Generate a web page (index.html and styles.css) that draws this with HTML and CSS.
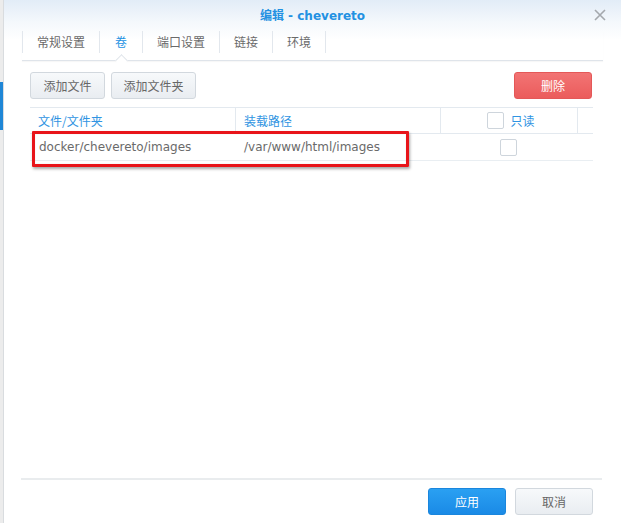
FILE: index.html
```html
<!DOCTYPE html>
<html lang="zh-CN">
<head>
<meta charset="utf-8">
<title>编辑 - chevereto</title>
<link rel="stylesheet" href="styles.css">
</head>
<body>
<div class="window">
  <div class="side"><div class="side-mark"></div></div>
  <div class="dialog">
    <header class="titlebar">
      <span class="tb-left"></span>
      <h1 class="title">编辑 - chevereto</h1>
      <div class="tb-right">
        <span class="close" aria-label="关闭">
          <svg width="12" height="12" viewBox="0 0 12 12"><path d="M1 1 L11 11 M11 1 L1 11" stroke="#a4a8ad" stroke-width="1.6" fill="none"/></svg>
        </span>
      </div>
    </header>
    <nav class="tabs">
      <div class="tab">常规设置</div>
      <div class="tab active">卷</div>
      <div class="tab">端口设置</div>
      <div class="tab">链接</div>
      <div class="tab last">环境</div>
    </nav>
    <div class="toolbar">
      <div class="btn-group">
        <button class="btn btn-add-file">添加文件</button>
        <button class="btn btn-add-folder">添加文件夹</button>
      </div>
      <button class="btn btn-danger">删除</button>
    </div>
    <div class="table">
      <div class="thead">
        <div class="th">文件/文件夹</div>
        <div class="th">装载路径</div>
        <div class="th th-center"><span class="checkbox"></span><span>只读</span></div>
        <div class="th th-end"></div>
      </div>
      <div class="trow">
        <div class="td latin">docker/chevereto/images</div>
        <div class="td latin">/var/www/html/images</div>
        <div class="td td-center"><span class="checkbox"></span></div>
        <div class="td"></div>
      </div>
      <div class="highlight"></div>
    </div>
    <div class="spacer"></div>
    <footer class="footer">
      <button class="btn btn-primary">应用</button>
      <button class="btn btn-cancel">取消</button>
    </footer>
  </div>
</div>
</body>
</html>
```
FILE: styles.css
```css
* { box-sizing: border-box; }
html, body { margin: 0; padding: 0; background: #fff; }
body {
  font-family: "Noto Sans CJK SC", "DejaVu Sans", sans-serif;
  font-size: 12px;
  color: #666;
}
.window {
  width: 621px;
  height: 523px;
  display: flex;
  overflow: hidden;
}
.side {
  width: 3px;
  background: #ececec;
  display: flex;
  flex-direction: column;
}
.side-mark {
  margin-top: 82px;
  height: 48px;
  background: #1f86d6;
}
.dialog {
  flex: 1;
  display: flex;
  flex-direction: column;
  border-left: 1px solid #d9dcdf;
  background: linear-gradient(#e2ecf7 0px, #f4f8fc 22px, #ffffff 40px);
}
.titlebar {
  height: 31px;
  display: grid;
  grid-template-columns: 1fr auto 1fr;
  align-items: center;
}
.title {
  margin: 0;
  padding-top: 1px;
  font-family: "DejaVu Sans", "Noto Sans CJK SC", sans-serif;
  font-size: 12px;
  font-weight: bold;
  color: #2391e2;
  line-height: 30px;
}
.tb-right {
  display: flex;
  justify-content: flex-end;
  padding-right: 15px;
}
.close {
  display: flex;
  width: 12px;
  height: 12px;
  margin-top: -2px;
}
.tabs {
  display: flex;
  margin: 0 18px;
  padding-bottom: 7px;
  border-bottom: 1px solid #dfe4ea;
  box-shadow: 0 1px 1px rgba(0,0,0,0.03);
}
.tab {
  position: relative;
  height: 22px;
  line-height: 22px;
  padding: 0 14px;
  border-left: 1px solid #e2e7ed;
  color: #6a6a6a;
}
.tab.last { border-right: 1px solid #e2e7ed; }
.tab.active { color: #2391e2; padding: 0 15px; }
.tab.active::after {
  content: "";
  position: absolute;
  left: calc(50% - 4px);
  top: calc(100% + 3px);
  width: 8px;
  height: 8px;
  background: #fff;
  border-top: 1px solid #dfe4ea;
  border-left: 1px solid #dfe4ea;
  transform: rotate(45deg);
}
.toolbar {
  display: flex;
  justify-content: space-between;
  align-items: center;
  margin-top: 11px;
  padding: 0 29px 0 26px;
}
.btn-group { display: flex; gap: 6px; }
.btn {
  height: 27px;
  padding: 0;
  font-family: "Noto Sans CJK SC", sans-serif;
  font-size: 12px;
  color: #666;
  background: linear-gradient(#f7f9fb, #e9edf1);
  border: 1px solid #d2d8de;
  border-radius: 3px;
}
.btn-add-file { width: 75px; }
.btn-add-folder { width: 85px; }
.btn-danger {
  width: 78px;
  color: #fff;
  background: linear-gradient(#f27474, #eb5c5c);
  border-color: #e45858;
}
.table {
  position: relative;
  margin: 8px 0 0 26px;
  width: 563px;
}
.thead, .trow {
  display: grid;
  grid-template-columns: 206px 205px 137px 15px;
}
.thead {
  height: 27px;
  border-top: 1px solid #e3e9ef;
  border-bottom: 1px solid #e3e9ef;
}
.th {
  display: flex;
  align-items: center;
  padding-left: 8px;
  color: #3094e2;
  border-right: 1px solid #e3e9ef;
}
.th-center { justify-content: center; padding-left: 4px; gap: 6px; }
.th-end { border-right: none; }
.trow {
  height: 27px;
  border-bottom: 1px solid #e9eef2;
}
.td {
  display: flex;
  align-items: center;
  padding-left: 9px;
}
.td + .td { padding-left: 8px; }
.latin {
  font-family: "DejaVu Sans", sans-serif;
  font-size: 12px;
  color: #6a6a6a;
}
.td-center { justify-content: center; padding-left: 0 !important; padding-right: 2px; }
.checkbox {
  display: inline-block;
  width: 17px;
  height: 17px;
  border: 1px solid #ced5dc;
  border-radius: 2px;
  background: #fff;
}
.highlight {
  position: absolute;
  left: 2px;
  top: 24px;
  width: 377px;
  height: 36px;
  border: 3px solid #e8141a;
  border-radius: 1px;
  box-shadow: 1px 2px 3px rgba(0,0,0,0.35), inset 0 0 1px rgba(0,0,0,0.2);
}
.spacer { flex: 1; }
.footer {
  display: flex;
  justify-content: flex-end;
  gap: 9px;
  margin: 0 19px 0 17px;
  padding: 8px 9px 8px 0;
  border-top: 2px solid #e9ecee;
}
.btn-primary {
  width: 78px;
  color: #fff;
  background: linear-gradient(#2aa0f2, #1a8ae6);
  border-color: #1a86dd;
}
.btn-cancel { width: 78px; }
```
